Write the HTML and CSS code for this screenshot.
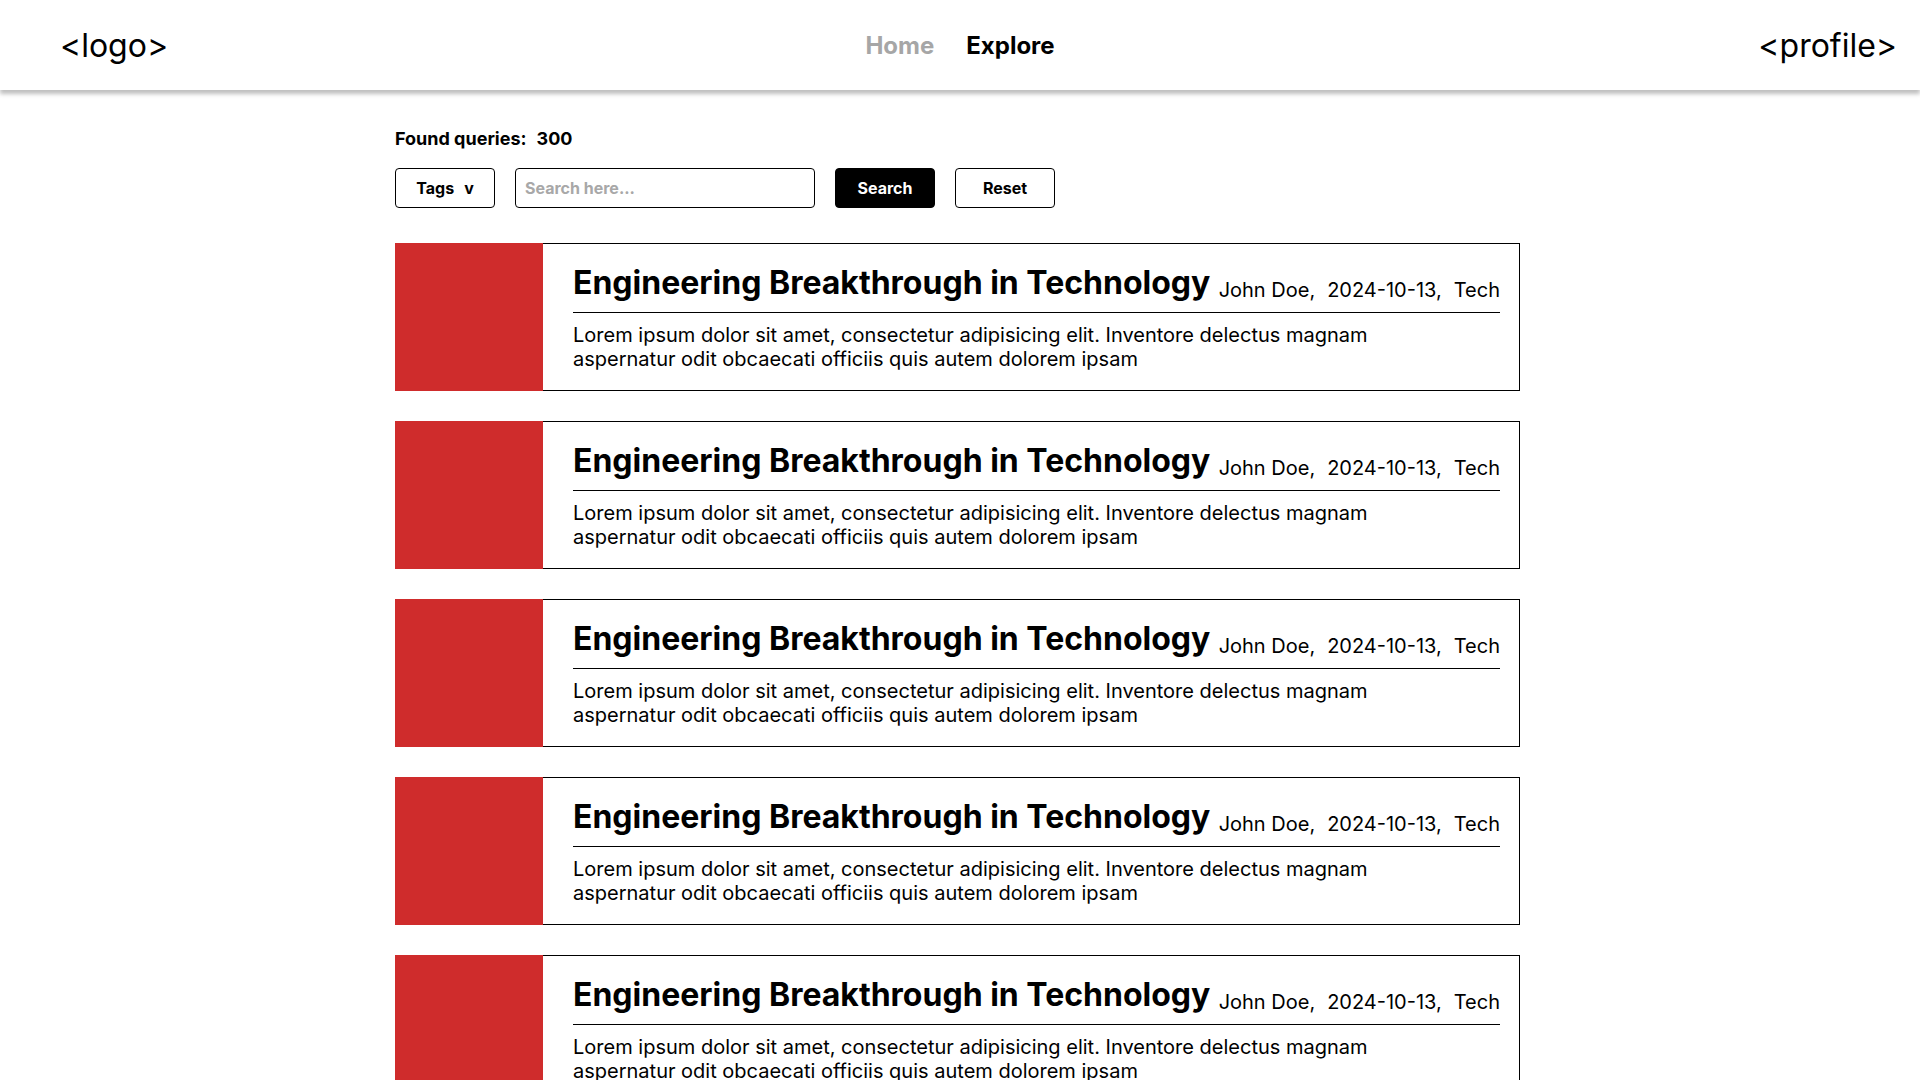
FILE: index.html
```html
<!DOCTYPE html>
<html lang="en">
<head>
<meta charset="utf-8">
<title>Explore</title>
<link rel="stylesheet" href="styles.css">
</head>
<body>
<header class="topbar">
  <div class="logo">&lt;logo&gt;</div>
  <nav class="nav">
    <a class="nav-link muted" href="#">Home</a>
    <a class="nav-link active" href="#">Explore</a>
  </nav>
  <div class="profile">&lt;profile&gt;</div>
</header>
<main class="main">
  <p class="found"><span>Found queries:</span><span class="count">300</span></p>
  <div class="controls">
    <button class="btn btn-outline">Tags<span class="chev">v</span></button>
    <input class="search" type="text" placeholder="Search here...">
    <button class="btn btn-dark">Search</button>
    <button class="btn btn-outline">Reset</button>
  </div>
  <section class="list">
    <article class="card">
      <div class="thumb"></div>
      <div class="card-body">
        <div class="card-head">
          <h2 class="card-title">Engineering Breakthrough in Technology</h2>
          <div class="meta"><span>John Doe,</span><span>2024-10-13,</span><span>Tech</span></div>
        </div>
        <p class="card-text">Lorem ipsum dolor sit amet, consectetur adipisicing elit. Inventore delectus magnam aspernatur odit obcaecati officiis quis autem dolorem ipsam</p>
      </div>
    </article>
    <article class="card">
      <div class="thumb"></div>
      <div class="card-body">
        <div class="card-head">
          <h2 class="card-title">Engineering Breakthrough in Technology</h2>
          <div class="meta"><span>John Doe,</span><span>2024-10-13,</span><span>Tech</span></div>
        </div>
        <p class="card-text">Lorem ipsum dolor sit amet, consectetur adipisicing elit. Inventore delectus magnam aspernatur odit obcaecati officiis quis autem dolorem ipsam</p>
      </div>
    </article>
    <article class="card">
      <div class="thumb"></div>
      <div class="card-body">
        <div class="card-head">
          <h2 class="card-title">Engineering Breakthrough in Technology</h2>
          <div class="meta"><span>John Doe,</span><span>2024-10-13,</span><span>Tech</span></div>
        </div>
        <p class="card-text">Lorem ipsum dolor sit amet, consectetur adipisicing elit. Inventore delectus magnam aspernatur odit obcaecati officiis quis autem dolorem ipsam</p>
      </div>
    </article>
    <article class="card">
      <div class="thumb"></div>
      <div class="card-body">
        <div class="card-head">
          <h2 class="card-title">Engineering Breakthrough in Technology</h2>
          <div class="meta"><span>John Doe,</span><span>2024-10-13,</span><span>Tech</span></div>
        </div>
        <p class="card-text">Lorem ipsum dolor sit amet, consectetur adipisicing elit. Inventore delectus magnam aspernatur odit obcaecati officiis quis autem dolorem ipsam</p>
      </div>
    </article>
    <article class="card">
      <div class="thumb"></div>
      <div class="card-body">
        <div class="card-head">
          <h2 class="card-title">Engineering Breakthrough in Technology</h2>
          <div class="meta"><span>John Doe,</span><span>2024-10-13,</span><span>Tech</span></div>
        </div>
        <p class="card-text">Lorem ipsum dolor sit amet, consectetur adipisicing elit. Inventore delectus magnam aspernatur odit obcaecati officiis quis autem dolorem ipsam</p>
      </div>
    </article>
    <article class="card">
      <div class="thumb"></div>
      <div class="card-body">
        <div class="card-head">
          <h2 class="card-title">Engineering Breakthrough in Technology</h2>
          <div class="meta"><span>John Doe,</span><span>2024-10-13,</span><span>Tech</span></div>
        </div>
        <p class="card-text">Lorem ipsum dolor sit amet, consectetur adipisicing elit. Inventore delectus magnam aspernatur odit obcaecati officiis quis autem dolorem ipsam</p>
      </div>
    </article>
  </section>
</main>
</body>
</html>
```
FILE: styles.css
```css
* { box-sizing: border-box; }

html, body {
  margin: 0;
  padding: 0;
  background: #ffffff;
  color: #000000;
  font-family: Inter, "Liberation Sans", Arial, sans-serif;
}

.topbar {
  height: 90px;
  display: grid;
  grid-template-columns: 1fr auto 1fr;
  align-items: center;
  padding: 0 23px;
  background: #ffffff;
  box-shadow: 0 4px 4px rgba(0, 0, 0, 0.25);
  position: relative;
  z-index: 1;
}

.logo, .profile {
  font-size: 32px;
  font-weight: 400;
}

.logo { margin-left: 37px; }

.profile { justify-self: end; }

.nav {
  display: flex;
  gap: 32px;
}

.nav-link {
  font-size: 24px;
  font-weight: 700;
  text-decoration: none;
  color: #000000;
}

.nav-link.muted { color: #a6a6a6; }

.main {
  width: 1125px;
  margin-left: 395px;
  padding-top: 38px;
}

.found {
  margin: 0;
  font-size: 18px;
  font-weight: 700;
  line-height: 22px;
}

.found .count { margin-left: 10px; }

.controls {
  display: flex;
  gap: 20px;
  margin-top: 18px;
  height: 40px;
}

.btn {
  width: 100px;
  height: 40px;
  border: 1px solid #000000;
  border-radius: 4px;
  background: #ffffff;
  color: #000000;
  font-family: inherit;
  font-size: 16px;
  font-weight: 700;
  cursor: pointer;
}

.btn-dark {
  background: #000000;
  color: #ffffff;
}

.chev { margin-left: 10px; }

.search {
  width: 300px;
  height: 40px;
  border: 1px solid #000000;
  border-radius: 4px;
  padding: 0 9px;
  font-family: inherit;
  font-size: 16px;
  font-weight: 700;
}

.search::placeholder { color: #a8a8a8; }

.list {
  margin-top: 35px;
  display: flex;
  flex-direction: column;
  gap: 30px;
}

.card {
  display: flex;
  height: 148px;
}

.thumb {
  width: 148px;
  flex: 0 0 148px;
  background: #cf2c2c;
}

.card-body {
  flex: 1;
  border: 1px solid #000000;
  border-left: none;
  padding: 20px 19px 0 30px;
}

.card-head {
  display: flex;
  justify-content: space-between;
  align-items: flex-end;
  border-bottom: 1px solid #000000;
  padding-bottom: 10px;
}

.card-title {
  margin: 0;
  font-size: 32px;
  font-weight: 700;
  line-height: 38px;
}

.meta {
  display: flex;
  gap: 12px;
  font-size: 20px;
  font-weight: 400;
}

.card-text {
  margin: 10px 0 0;
  max-width: 820px;
  font-size: 20px;
  line-height: 24px;
}
```
